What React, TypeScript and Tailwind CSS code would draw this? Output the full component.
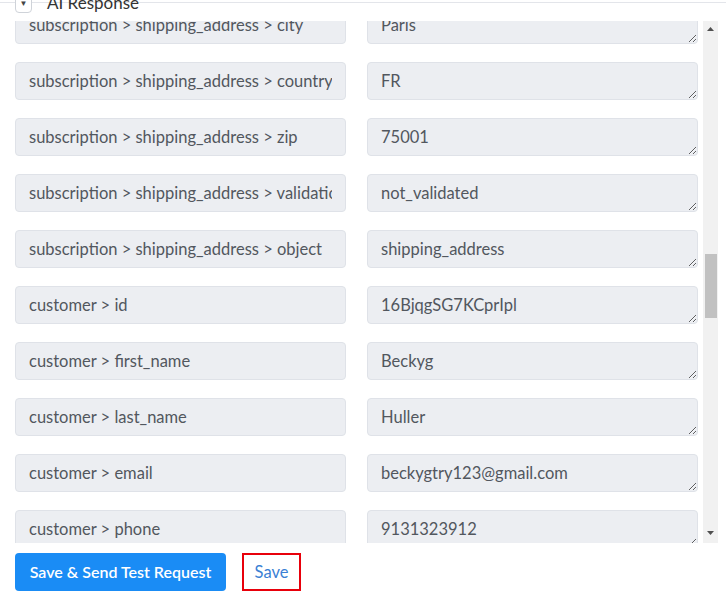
import React from 'react';

const rows: { key: string; value: string }[] = [
  { key: 'subscription > shipping_address > city', value: 'Paris' },
  { key: 'subscription > shipping_address > country', value: 'FR' },
  { key: 'subscription > shipping_address > zip', value: '75001' },
  { key: 'subscription > shipping_address > validation_status', value: 'not_validated' },
  { key: 'subscription > shipping_address > object', value: 'shipping_address' },
  { key: 'customer > id', value: '16BjqgSG7KCprIpl' },
  { key: 'customer > first_name', value: 'Beckyg' },
  { key: 'customer > last_name', value: 'Huller' },
  { key: 'customer > email', value: 'beckygtry123@gmail.com' },
  { key: 'customer > phone', value: '9131323912' },
];

const field =
  'w-[331px] h-[38px] px-[13px] bg-[#eceef2] border border-[#dfe2e8] rounded-[4px] text-[16.5px] text-[#52575e] outline-none';

export default function App() {
  return (
    <div className="w-[726px] h-[605px] bg-white overflow-hidden font-['Lato','Open_Sans',sans-serif]">
      {/* header, mostly scrolled off */}
      <div className="h-[21px] overflow-hidden relative">
        <div className="h-[2px]" />
        <div className="h-px bg-[#e3e5ea]" />
        <div className="absolute left-[15px] top-[-8px] flex items-center gap-[15px]">
          <div className="w-[17px] h-[20px] border border-[#cfd3d9] rounded-[4px] bg-white flex items-end justify-center pb-[5px]">
            <span className="text-[8px] leading-none text-[#444]">▼</span>
          </div>
          <span className="text-[17px] leading-[22px] text-[#333]">AI Response</span>
        </div>
      </div>

      {/* scrolled field list */}
      <div className="flex h-[522px]">
        <div className="w-[703px] overflow-hidden">
          <div className="-mt-[15px] pl-[15px] flex flex-col gap-[18px]">
            {rows.map(r => (
              <div key={r.key} className="flex gap-[21px]">
                <input readOnly value={r.key} className={`${field} pb-px`} />
                <textarea
                  readOnly
                  rows={1}
                  value={r.value}
                  className={`${field} pt-[6px] pb-[6px] leading-[24px] resize-y block`}
                />
              </div>
            ))}
          </div>
        </div>
        <div className="w-[15px] bg-[#f1f1f1] flex flex-col items-center">
          <div className="h-[14px] flex items-center justify-center mt-[1px]">
            <svg width="7" height="4" viewBox="0 0 7 4"><path d="M0 4 L3.5 0 L7 4 Z" fill="#505050" /></svg>
          </div>
          <div className="h-[218px]" />
          <div className="w-[12px] h-[64px] bg-[#c1c1c1]" />
          <div className="flex-1" />
          <div className="h-[14px] flex items-center justify-center mb-[3px]">
            <svg width="7" height="4" viewBox="0 0 7 4"><path d="M0 0 L3.5 4 L7 0 Z" fill="#505050" /></svg>
          </div>
        </div>
      </div>

      {/* actions */}
      <div className="flex items-center gap-[16px] pl-[15px] pt-[10px]">
        <button className="w-[211px] h-[38px] bg-[#1a8cf5] text-white rounded-[4px] text-[16px] font-semibold">
          Save &amp; Send Test Request
        </button>
        <button className="w-[59px] h-[38px] border-2 border-[#e8000b] text-[#3a7fd4] text-[16.5px] bg-white">
          Save
        </button>
      </div>
    </div>
  );
}
